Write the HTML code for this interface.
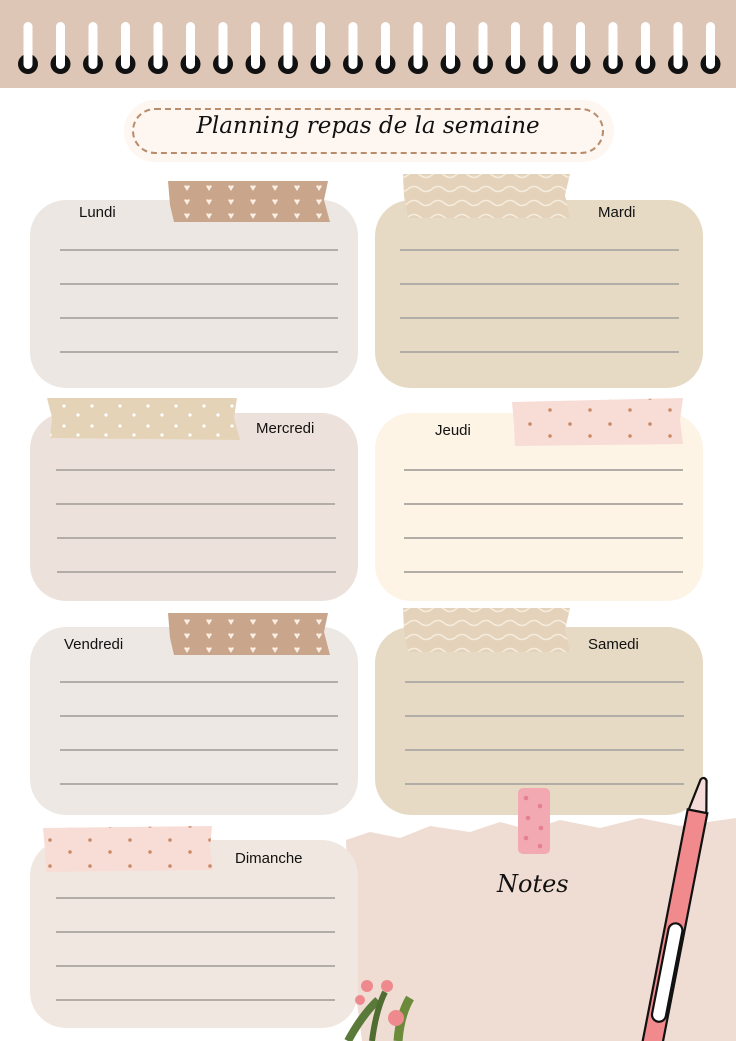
<!DOCTYPE html>
<html><head><meta charset="utf-8"><style>
*{margin:0;padding:0;box-sizing:border-box}
body{width:736px;height:1041px;background:#fff;position:relative;overflow:hidden;font-family:"Liberation Sans",sans-serif}
.abs{position:absolute}
.card{position:absolute;width:328px;height:188px;border-radius:36px}
.ln{position:absolute;height:1.5px;background:#b3ada7}
.lbl{position:absolute;font-size:15px;color:#111}
.script{font-family:"DejaVu Serif",serif;font-style:italic;color:#111}
</style></head><body>
<div class="abs" style="left:0;top:0;width:736px;height:88px;background:#dec6b6"></div>

<svg class="abs" style="left:0;top:0" width="736" height="1041">
<path d="M346 840 L370 832 L400 838 L430 826 L470 832 L500 822 L530 830 L560 820 L600 828 L640 818 L680 826 L736 818 L736 1041 L362 1041 L350 950 Z" fill="#efdcd3"/>
</svg>

<div class="abs" style="left:124px;top:100px;width:490px;height:62px;border-radius:31px;background:#fdf6f1"></div>
<div class="abs" style="left:132px;top:108px;width:472px;height:46px;border-radius:23px;border:2.5px dashed #b98c6c"></div>
<div class="abs script" style="left:132px;top:113px;width:472px;text-align:center;font-size:23px">Planning repas de la semaine</div>

<div class="card" style="left:30px;top:200px;background:#ece7e3"></div>
<div class="card" style="left:375px;top:200px;background:#e7dac5"></div>
<div class="card" style="left:30px;top:413px;background:#ede2db"></div>
<div class="card" style="left:375px;top:413px;background:#fdf4e5"></div>
<div class="card" style="left:30px;top:627px;background:#ede8e4"></div>
<div class="card" style="left:375px;top:627px;background:#e7dac5"></div>
<div class="card" style="left:30px;top:840px;background:#f0e8e0"></div>

<div class="abs script" style="left:497px;top:870px;font-size:24px">Notes</div>

<svg class="abs" style="left:0;top:0" width="736" height="1041">
<defs>
<pattern id="hearts" width="22" height="14" patternUnits="userSpaceOnUse"><path d="M8 4 a2 2 0 0 1 3 0 a2 2 0 0 1 3 0 l-3 5z" fill="#fbeee2"/></pattern>
<pattern id="dots" width="28" height="20" patternUnits="userSpaceOnUse"><circle cx="8" cy="6" r="1.6" fill="#fff"/><circle cx="22" cy="15" r="1.6" fill="#fff"/></pattern>
<pattern id="waves" width="24" height="14" patternUnits="userSpaceOnUse"><path d="M0 7 Q6 2 12 7 T24 7" stroke="#f6ecdd" stroke-width="1.5" fill="none"/></pattern>
<pattern id="flow" width="40" height="26" patternUnits="userSpaceOnUse"><g fill="#c98a68"><circle cx="10" cy="8" r="1.8"/><circle cx="30" cy="20" r="1.8"/></g></pattern>
</defs>
<path d="M168 181 L328 181 L324 200 L330 222 L174 222 L170 205 Z" fill="#c9a68b"/><path d="M168 181 L328 181 L324 200 L330 222 L174 222 L170 205 Z" fill="url(#hearts)"/>
<path d="M168 613 L328 613 L324 632 L330 655 L174 655 L170 638 Z" fill="#c9a68b"/><path d="M168 613 L328 613 L324 632 L330 655 L174 655 L170 638 Z" fill="url(#hearts)"/>
<path d="M403 174 L570 174 L565 195 L570 218 L408 218 L404 196 Z" fill="#e4d3ba"/><path d="M403 174 L570 174 L565 195 L570 218 L408 218 L404 196 Z" fill="url(#waves)"/>
<path d="M403 608 L570 608 L565 630 L570 652 L408 652 L404 630 Z" fill="#e4d3ba"/><path d="M403 608 L570 608 L565 630 L570 652 L408 652 L404 630 Z" fill="url(#waves)"/>
<path d="M47 398 L237 398 L234 418 L240 440 L50 438 L52 418 Z" fill="#e5d3b8"/><path d="M47 398 L237 398 L234 418 L240 440 L50 438 L52 418 Z" fill="url(#dots)"/>
<path d="M512 402 L683 398 L680 420 L683 444 L515 446 L514 424 Z" fill="#f8dcd6"/><path d="M512 402 L683 398 L680 420 L683 444 L515 446 L514 424 Z" fill="url(#flow)"/>
<path d="M43 828 L212 826 L210 848 L213 870 L46 872 L45 850 Z" fill="#f8dcd6"/><path d="M43 828 L212 826 L210 848 L213 870 L46 872 L45 850 Z" fill="url(#flow)"/>
<rect x="518" y="788" width="32" height="66" rx="5" fill="#f3a9b2"/>
<g fill="#e67f92"><circle cx="526" cy="798" r="2.3"/><circle cx="540" cy="806" r="2.3"/><circle cx="528" cy="818" r="2.3"/><circle cx="541" cy="828" r="2.3"/><circle cx="526" cy="838" r="2.3"/><circle cx="540" cy="846" r="2.3"/></g>
<path d="M348 1041 Q362 1015 378 1000" stroke="#5a7a3a" stroke-width="8" fill="none"/>
<path d="M398 1041 Q400 1015 410 998" stroke="#6b8a3a" stroke-width="9" fill="none"/>
<path d="M372 1041 Q376 1010 385 992" stroke="#4f6d30" stroke-width="6" fill="none"/>
<circle cx="367" cy="986" r="6" fill="#ee8a8e"/><circle cx="387" cy="986" r="6" fill="#ee8a8e"/><circle cx="360" cy="1000" r="5" fill="#ee8a8e"/><circle cx="396" cy="1018" r="8" fill="#ee8a8e"/>
<g transform="translate(704,778) rotate(11)">
<path d="M-3 2 Q0 -2 3 2 L9 34 L-9 34 Z" fill="#f6dcd8" stroke="#111" stroke-width="2.2" stroke-linejoin="round"/>
<rect x="-10" y="34" width="20" height="245" fill="#f08a8c" stroke="#111" stroke-width="2.2"/>
<rect x="-6" y="148" width="14" height="100" rx="7" fill="#fff" stroke="#111" stroke-width="2.2"/>
</g>
</svg>

<div class="lbl" style="left:79px;top:204px">Lundi</div>
<div class="lbl" style="left:598px;top:204px">Mardi</div>
<div class="lbl" style="left:256px;top:420px">Mercredi</div>
<div class="lbl" style="left:435px;top:422px">Jeudi</div>
<div class="lbl" style="left:64px;top:636px">Vendredi</div>
<div class="lbl" style="left:588px;top:636px">Samedi</div>
<div class="lbl" style="left:235px;top:850px">Dimanche</div>

<div class="ln" style="left:60px;width:278px;top:249px"></div><div class="ln" style="left:60px;width:278px;top:283px"></div><div class="ln" style="left:60px;width:278px;top:317px"></div><div class="ln" style="left:60px;width:278px;top:351px"></div>
<div class="ln" style="left:400px;width:279px;top:249px"></div><div class="ln" style="left:400px;width:279px;top:283px"></div><div class="ln" style="left:400px;width:279px;top:317px"></div><div class="ln" style="left:400px;width:279px;top:351px"></div>
<div class="ln" style="left:56px;width:279px;top:469px"></div><div class="ln" style="left:56px;width:279px;top:503px"></div><div class="ln" style="left:57px;width:279px;top:537px"></div><div class="ln" style="left:57px;width:279px;top:571px"></div>
<div class="ln" style="left:404px;width:279px;top:469px"></div><div class="ln" style="left:404px;width:279px;top:503px"></div><div class="ln" style="left:404px;width:279px;top:537px"></div><div class="ln" style="left:404px;width:279px;top:571px"></div>
<div class="ln" style="left:60px;width:278px;top:681px"></div><div class="ln" style="left:60px;width:278px;top:715px"></div><div class="ln" style="left:60px;width:278px;top:749px"></div><div class="ln" style="left:60px;width:278px;top:783px"></div>
<div class="ln" style="left:405px;width:279px;top:681px"></div><div class="ln" style="left:405px;width:279px;top:715px"></div><div class="ln" style="left:405px;width:279px;top:749px"></div><div class="ln" style="left:405px;width:279px;top:783px"></div>
<div class="ln" style="left:56px;width:279px;top:897px"></div><div class="ln" style="left:56px;width:279px;top:931px"></div><div class="ln" style="left:56px;width:279px;top:965px"></div><div class="ln" style="left:56px;width:279px;top:999px"></div>

<svg class="abs" style="left:0;top:0" width="736" height="88">
<defs><g id="ring"><circle cx="0" cy="64" r="10" fill="#111"/><rect x="-4.5" y="22" width="9" height="47" rx="4.5" fill="#fff"/></g></defs>
<use href="#ring" x="28"/><use href="#ring" x="60.5"/><use href="#ring" x="93"/><use href="#ring" x="125.5"/><use href="#ring" x="158"/><use href="#ring" x="190.5"/><use href="#ring" x="223"/><use href="#ring" x="255.5"/><use href="#ring" x="288"/><use href="#ring" x="320.5"/><use href="#ring" x="353"/><use href="#ring" x="385.5"/><use href="#ring" x="418"/><use href="#ring" x="450.5"/><use href="#ring" x="483"/><use href="#ring" x="515.5"/><use href="#ring" x="548"/><use href="#ring" x="580.5"/><use href="#ring" x="613"/><use href="#ring" x="645.5"/><use href="#ring" x="678"/><use href="#ring" x="710.5"/>
</svg>
</body></html>
